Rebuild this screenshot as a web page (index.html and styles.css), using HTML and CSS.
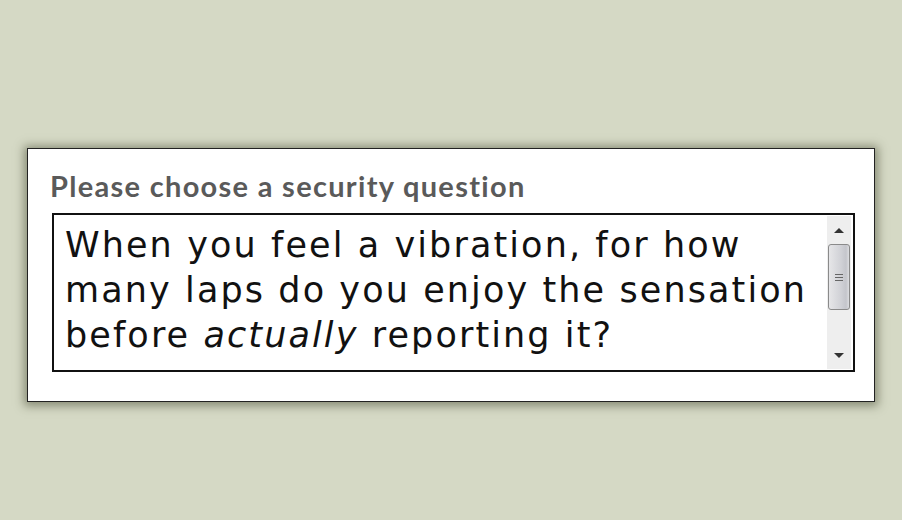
FILE: index.html
```html
<!DOCTYPE html>
<html lang="en">
<head>
    <meta charset="UTF-8">
    <title>Security question</title>
    <link rel="stylesheet" href="styles.css">
</head>
<body>
    <div class="card">
        <div class="label">Please choose a security question</div>
        <div class="box">
            <div class="question">When you feel a vibration, for how many laps do you enjoy the sensation before <em>actually</em> reporting it?</div>
            <div class="scrollbar">
                <div class="arrow up"></div>
                <div class="track">
                    <div class="thumb"><span></span><span></span><span></span></div>
                </div>
                <div class="arrow down"></div>
            </div>
        </div>
    </div>
</body>
</html>
```

FILE: styles.css
```css
body {
    margin: 0;
    width: 902px;
    height: 520px;
    background-color: #d5d9c5;
    padding-top: 148px;
    box-sizing: border-box;
}
.card {
    margin-left: 27px;
    width: 848px;
    height: 254px;
    background: #fff;
    border: 1px solid #222;
    box-shadow: 0 1px 9px 3px rgba(60, 64, 40, 0.5);
    padding: 20px 19px 0 24px;
    box-sizing: border-box;
}
.label {
    font-family: Lato, sans-serif;
    font-weight: bold;
    font-size: 29px;
    letter-spacing: 1.3px;
    color: #5a5a5a;
    line-height: 34px;
    margin-left: -2px;
}
.box {
    margin-top: 10px;
    height: 159px;
    border: 2px solid #111;
    display: flex;
    box-sizing: border-box;
    padding: 1px 2px 1px 0;
}
.question {
    flex: 1;
    font-family: "DejaVu Sans", Verdana, sans-serif;
    font-size: 35px;
    letter-spacing: 2.1px;
    line-height: 45px;
    color: #111;
    padding: 7px 0 0 11px;
}
.question em {
    font-style: italic;
}
.scrollbar {
    width: 24px;
    background: #eeeeee;
    display: flex;
    flex-direction: column;
}
.arrow {
    height: 28px;
    display: flex;
    align-items: center;
    justify-content: center;
}
.arrow::after {
    content: "";
    border-left: 5px solid transparent;
    border-right: 5px solid transparent;
}
.up::after {
    border-bottom: 5px solid #333;
}
.down::after {
    border-top: 5px solid #333;
}
.track {
    flex: 1;
}
.thumb {
    height: 66px;
    margin: 0 1px;
    border: 1px solid #8a8a8a;
    border-radius: 3px;
    background: linear-gradient(to right, #e6e6e8, #d0d1d6 60%, #c4c5cb 85%, #dcdde0);
    display: flex;
    flex-direction: column;
    align-items: center;
    justify-content: center;
    gap: 2px;
    box-sizing: border-box;
}
.thumb span {
    width: 8px;
    height: 1px;
    background: #666;
}
```
